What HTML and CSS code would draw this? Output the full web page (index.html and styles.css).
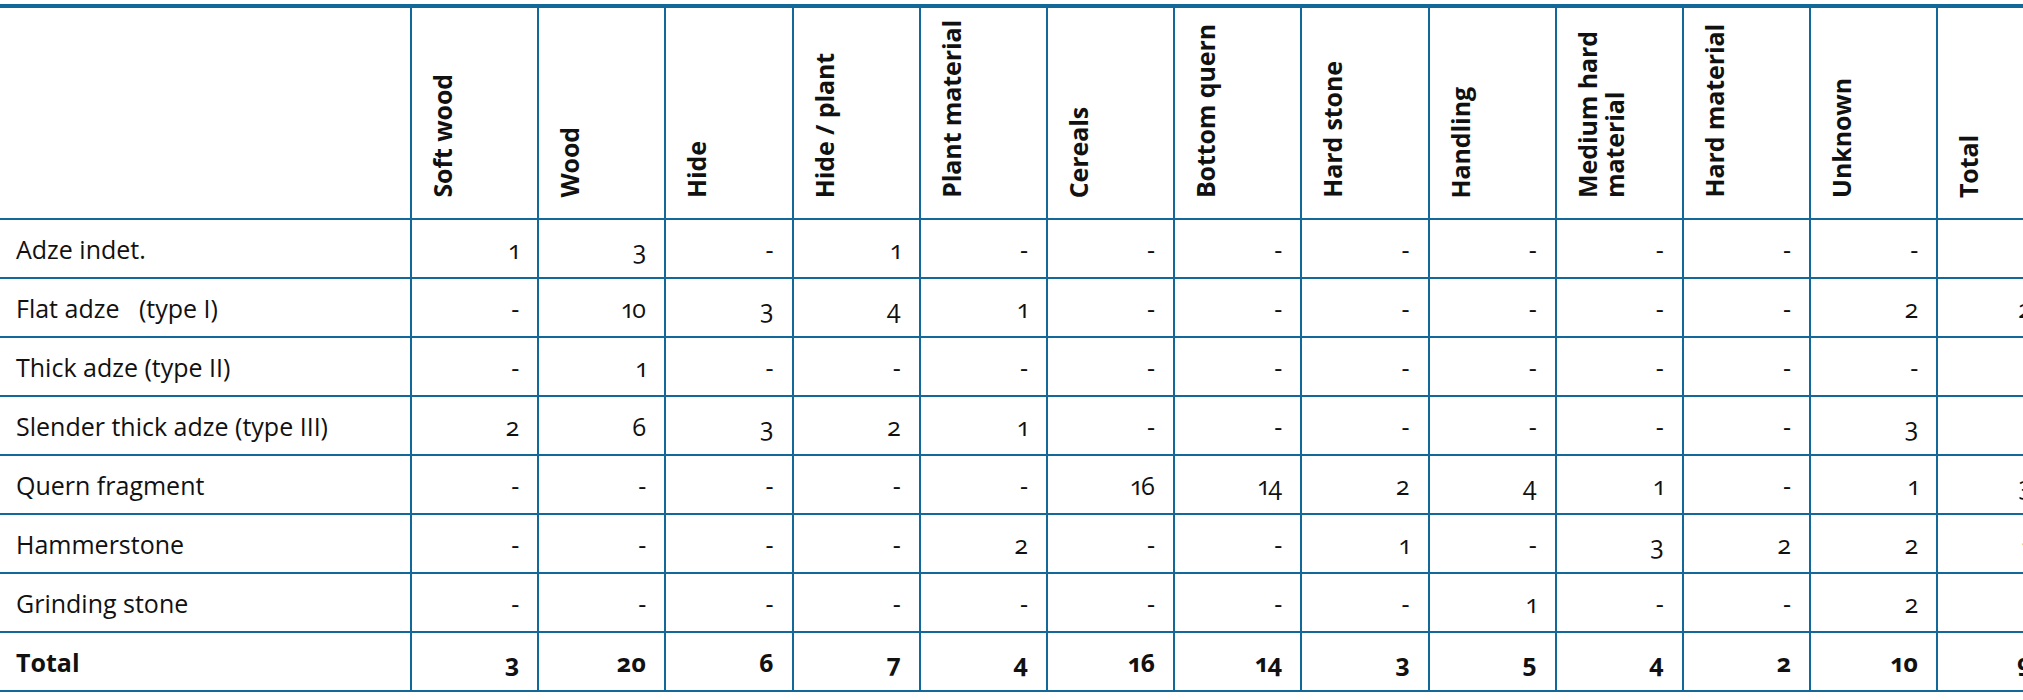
FILE: index.html
```html
<!DOCTYPE html>
<html lang="en">
<head>
<meta charset="utf-8">
<title>Use-wear table</title>
<link rel="stylesheet" href="styles.css">
</head>
<body>
<table class="data">
  <colgroup>
    <col class="c-label">
    <col class="c-num"><col class="c-num"><col class="c-num"><col class="c-num">
    <col class="c-num"><col class="c-num"><col class="c-num"><col class="c-num">
    <col class="c-num"><col class="c-num"><col class="c-num"><col class="c-num">
    <col class="c-num">
  </colgroup>
  <thead>
    <tr class="head">
      <th class="corner"></th>
      <th><span class="vt">Soft wood</span></th>
      <th><span class="vt">Wood</span></th>
      <th><span class="vt">Hide</span></th>
      <th><span class="vt">Hide / plant</span></th>
      <th><span class="vt">Plant material</span></th>
      <th><span class="vt">Cereals</span></th>
      <th><span class="vt">Bottom quern</span></th>
      <th><span class="vt">Hard stone</span></th>
      <th><span class="vt">Handling</span></th>
      <th><span class="vt">Medium hard<br>material</span></th>
      <th><span class="vt">Hard material</span></th>
      <th><span class="vt">Unknown</span></th>
      <th><span class="vt">Total</span></th>
    </tr>
  </thead>
  <tbody>
    <tr>
      <td class="label">Adze indet.</td>
      <td>1</td><td>3</td><td>-</td><td>1</td><td>-</td><td>-</td><td>-</td><td>-</td><td>-</td><td>-</td><td>-</td><td>-</td><td>5</td>
    </tr>
    <tr>
      <td class="label">Flat adze&nbsp;&nbsp; (type I)</td>
      <td>-</td><td>10</td><td>3</td><td>4</td><td>1</td><td>-</td><td>-</td><td>-</td><td>-</td><td>-</td><td>-</td><td>2</td><td>20</td>
    </tr>
    <tr>
      <td class="label">Thick adze (type II)</td>
      <td>-</td><td>1</td><td>-</td><td>-</td><td>-</td><td>-</td><td>-</td><td>-</td><td>-</td><td>-</td><td>-</td><td>-</td><td>1</td>
    </tr>
    <tr>
      <td class="label">Slender thick adze (type III)</td>
      <td>2</td><td>6</td><td>3</td><td>2</td><td>1</td><td>-</td><td>-</td><td>-</td><td>-</td><td>-</td><td>-</td><td>3</td><td>17</td>
    </tr>
    <tr>
      <td class="label">Quern fragment</td>
      <td>-</td><td>-</td><td>-</td><td>-</td><td>-</td><td>16</td><td>14</td><td>2</td><td>4</td><td>1</td><td>-</td><td>1</td><td>38</td>
    </tr>
    <tr>
      <td class="label">Hammerstone</td>
      <td>-</td><td>-</td><td>-</td><td>-</td><td>2</td><td>-</td><td>-</td><td>1</td><td>-</td><td>3</td><td>2</td><td>2</td><td>10</td>
    </tr>
    <tr>
      <td class="label">Grinding stone</td>
      <td>-</td><td>-</td><td>-</td><td>-</td><td>-</td><td>-</td><td>-</td><td>-</td><td>1</td><td>-</td><td>-</td><td>2</td><td>3</td>
    </tr>
    <tr class="total">
      <td class="label">Total</td>
      <td>3</td><td>20</td><td>6</td><td>7</td><td>4</td><td>16</td><td>14</td><td>3</td><td>5</td><td>4</td><td>2</td><td>10</td><td>94</td>
    </tr>
  </tbody>
</table>
</body>
</html>
```
FILE: styles.css
```css
html, body {
  margin: 0;
  padding: 0;
  background: #ffffff;
  overflow: hidden;
}

body {
  padding-top: 4px;
  font-family: "Open Sans", "Noto Sans", "Liberation Sans", sans-serif;
  font-size: 25px;
  color: #111111;
  font-variant-numeric: oldstyle-nums proportional-nums;
}

.data {
  border-collapse: collapse;
  table-layout: fixed;
  width: 2064px;
  border-top: 4px solid #13689a;
}

.c-label { width: 411px; }
.c-num { width: 127.2px; }

.data th,
.data td {
  border-left: 2px solid #13689a;
  border-bottom: 2px solid #13689a;
  padding: 0;
}

.data th:first-child,
.data td:first-child {
  border-left: none;
}

.head th {
  height: 190px;
  vertical-align: bottom;
  text-align: left;
  padding: 0 0 20px 17px;
  font-weight: 700;
}

.vt {
  display: inline-block;
  vertical-align: bottom;
  writing-mode: vertical-rl;
  transform: rotate(180deg);
  line-height: 27px;
  white-space: nowrap;
  letter-spacing: -0.1px;
}

.data td {
  height: 57px;
  text-align: right;
  padding-right: 18px;
  vertical-align: middle;
  line-height: 30px;
}

.data td.label {
  text-align: left;
  padding-left: 16px;
  padding-right: 0;
}

.total td {
  font-weight: 700;
}
```
